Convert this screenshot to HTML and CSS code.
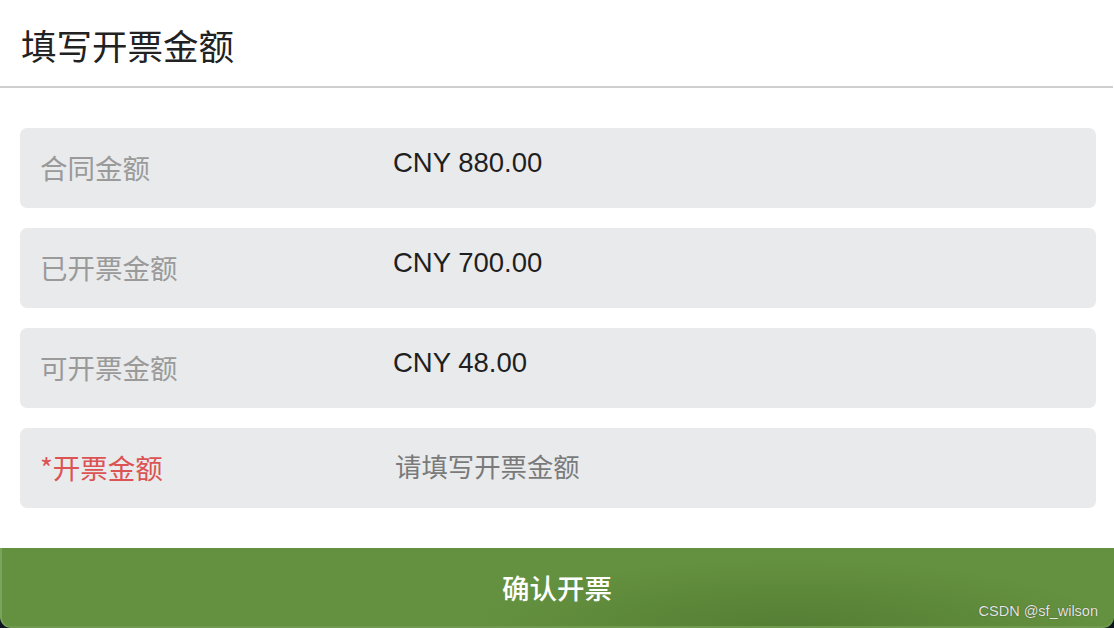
FILE: index.html
```html
<!DOCTYPE html>
<html lang="zh">
<head>
<meta charset="utf-8">
<title>填写开票金额</title>
<link rel="stylesheet" href="styles.css">
</head>
<body>
<div class="page">
  <header class="header">填写开票金额</header>
  <main class="form">
    <div class="row">
      <span class="label">合同金额</span>
      <span class="value">CNY 880.00</span>
    </div>
    <div class="row">
      <span class="label">已开票金额</span>
      <span class="value">CNY 700.00</span>
    </div>
    <div class="row">
      <span class="label">可开票金额</span>
      <span class="value">CNY 48.00</span>
    </div>
    <div class="row">
      <span class="label required">*开票金额</span>
      <span class="placeholder">请填写开票金额</span>
    </div>
  </main>
  <div class="footer">
    <button class="confirm">确认开票</button>
    <span class="watermark">CSDN @sf_wilson</span>
  </div>
</div>
</body>
</html>
```
FILE: styles.css
```css
html, body {
  margin: 0;
  padding: 0;
  background: #ffffff;
}
.page {
  width: 1114px;
  height: 628px;
  display: flex;
  flex-direction: column;
  font-family: "Noto Sans CJK SC", "Noto Sans", sans-serif;
  overflow: hidden;
}
.header {
  height: 88px;
  flex: none;
  box-sizing: border-box;
  padding-left: 21px;
  padding-top: 2px;
  display: flex;
  align-items: center;
  font-size: 35.5px;
  color: #222;
  border-bottom: 2px solid #cfcfcf;
  margin-right: 1px;
}
.form {
  padding: 40px 18px 0 20px;
  display: flex;
  flex-direction: column;
  gap: 20px;
}
.row {
  height: 80px;
  background: #e9eaec;
  border-radius: 7px;
  display: grid;
  grid-template-columns: 352px 1fr;
  align-items: center;
  padding-left: 20px;
}
.label {
  font-size: 27.5px;
  color: #9a9a9a;
  line-height: 1;
}
.label.required {
  color: #db5352;
}
.value {
  font-family: "Liberation Sans", Arial, sans-serif;
  font-size: 27.5px;
  color: #1f1f1f;
  margin-bottom: 10px;
  line-height: 1;
  margin-left: 1px;
}
.placeholder {
  font-size: 26.4px;
  color: #7a7a7a;
  line-height: 1;
  margin-left: 3px;
  margin-bottom: 3px;
}
.footer {
  margin-top: 40px;
  height: 80px;
  flex: none;
  background: #0c1521;
  position: relative;
  display: flex;
}
.confirm {
  flex: 1;
  border: none;
  margin: 0;
  padding: 0;
  border-radius: 0 0 11px 11px;
  background: radial-gradient(ellipse 320px 70px at 790px 80px, rgba(40, 70, 20, 0.25), rgba(40, 70, 20, 0) 100%), #64913f;
  box-shadow: inset 2px 0 0 #7aa35c, inset 0 -2px 0 #6f9a4e;
  color: #ffffff;
  font-family: "Noto Sans CJK SC", sans-serif;
  font-size: 27.5px;
  font-weight: 500;
  padding-bottom: 2px;
}
.watermark {
  position: absolute;
  right: 16px;
  bottom: 9px;
  font-family: "Liberation Sans", Arial, sans-serif;
  font-size: 14.5px;
  color: #e6e6e6;
  text-shadow: 0 0 1px rgba(0, 0, 0, 0.6);
}
```
